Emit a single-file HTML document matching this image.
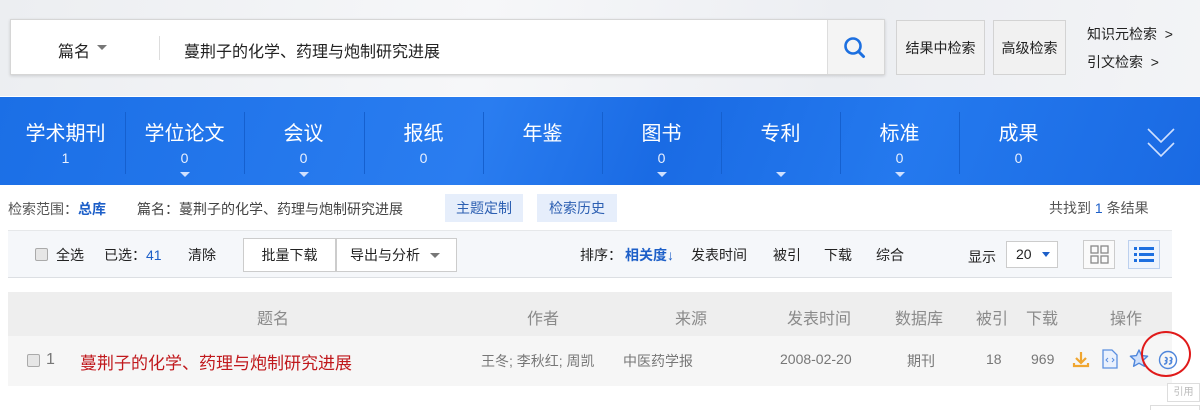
<!DOCTYPE html>
<html><head><meta charset="utf-8"><style>
*{margin:0;padding:0;box-sizing:border-box}
body{width:1200px;height:410px;overflow:hidden;background:#fff;font-family:"Liberation Sans","Noto Sans CJK SC",sans-serif;color:#333;position:relative}
.a{position:absolute;white-space:nowrap}
.top{position:absolute;left:0;top:0;width:1200px;height:96px;background:linear-gradient(100deg,#eceef1,#f6f7f9 40%,#eceef2 70%,#f3f4f6)}
.sbox{position:absolute;left:10px;top:19px;width:875px;height:56px;background:#fff;border:1px solid #d6d6d6;box-shadow:0 1px 3px rgba(0,0,0,.15)}
.btn{position:absolute;top:20px;height:55px;background:#f1f1f1;border:1px solid #d3d3d3;font-size:14px;color:#222;display:flex;align-items:center;justify-content:center}
.blue{position:absolute;left:0;top:97px;width:1200px;height:88px;background:linear-gradient(110deg,#1b6fe6,#2a7df0 40%,#1a6be4 55%,#2479ee 75%,#1a6ae3)}
.tab{position:absolute;top:97px;width:119px;height:88px;color:#fff;text-align:center}
.tab b{display:block;font-weight:normal;font-size:20px;margin-top:25px;line-height:24px}
.tab i{display:block;font-style:normal;font-size:14px;line-height:16px;margin-top:4px;color:#e8f0ff}
.tab s{position:absolute;left:55px;top:75px;border-left:5px solid transparent;border-right:5px solid transparent;border-top:5px solid #cfe0ff}
.sep{position:absolute;top:112px;width:1px;height:62px;background:#1560cf}
.f14{font-size:14px}
.tool{position:absolute;left:8px;top:230px;width:1164px;height:48px;background:#f5f7fa;border-top:1px solid #e6e8ea;border-bottom:1px solid #dcdfe3}
.hdr{position:absolute;left:8px;top:292px;width:1164px;height:44px;background:#eeeeee}
.row{position:absolute;left:8px;top:336px;width:1164px;height:50px;background:#f6f6f6}
.g{color:#8a8a8a;font-size:16px}
.cb{position:absolute;width:13px;height:13px;border:1px solid #aaa;border-radius:2px;background:#e6e6e6}
</style></head><body>
<div class="top"></div>
<div class="sbox"></div>
<div class="a" style="left:58px;top:38px;font-size:16px;color:#222">篇名</div>
<div class="a" style="left:97px;top:45px;border-left:5px solid transparent;border-right:5px solid transparent;border-top:5px solid #777"></div>
<div class="a" style="left:159px;top:36px;width:1px;height:24px;background:#ddd"></div>
<div class="a" style="left:184px;top:38px;font-size:16px;color:#222">蔓荆子的化学、药理与炮制研究进展</div>
<div class="a" style="left:827px;top:20px;width:57px;height:54px;background:#f4f4f4;border-left:1px solid #ddd"></div>
<svg class="a" style="left:843px;top:36px" width="24" height="24" viewBox="0 0 24 24"><circle cx="10" cy="10" r="7.5" fill="none" stroke="#1c6fe0" stroke-width="2.6"/><path d="M15.5 15.5l5 5" stroke="#1c6fe0" stroke-width="3" stroke-linecap="round"/></svg>
<div class="btn" style="left:896px;width:89px">结果中检索</div>
<div class="btn" style="left:993px;width:73px">高级检索</div>
<div class="a f14" style="left:1087px;top:24px;color:#222">知识元检索 &nbsp;&gt;</div>
<div class="a f14" style="left:1087px;top:52px;color:#222">引文检索 &nbsp;&gt;</div>

<div class="blue"></div>
<div class="tab" style="left:6px"><b>学术期刊</b><i>1</i></div>
<div class="tab" style="left:125px"><b>学位论文</b><i>0</i><s></s></div>
<div class="tab" style="left:244px"><b>会议</b><i>0</i><s></s></div>
<div class="tab" style="left:364px"><b>报纸</b><i>0</i></div>
<div class="tab" style="left:483px"><b>年鉴</b></div>
<div class="tab" style="left:602px"><b>图书</b><i>0</i><s></s></div>
<div class="tab" style="left:721px"><b>专利</b><s></s></div>
<div class="tab" style="left:840px"><b>标准</b><i>0</i><s></s></div>
<div class="tab" style="left:959px"><b>成果</b><i>0</i></div>
<div class="sep" style="left:125px"></div><div class="sep" style="left:244px"></div><div class="sep" style="left:364px"></div><div class="sep" style="left:483px"></div><div class="sep" style="left:602px"></div><div class="sep" style="left:721px"></div><div class="sep" style="left:840px"></div><div class="sep" style="left:959px"></div>
<svg class="a" style="left:1146px;top:127px" width="30" height="32" viewBox="0 0 30 32"><path d="M2 2l13 13 13-13M2 16l13 13 13-13" fill="none" stroke="#cfe0ff" stroke-width="1.6"/></svg>

<div class="a f14" style="left:8px;top:199px;color:#555">检索范围：<b style="color:#1d5fc8">总库</b></div>
<div class="a f14" style="left:137px;top:199px;color:#444">篇名：蔓荆子的化学、药理与炮制研究进展</div>
<div class="a f14" style="left:445px;top:194px;width:78px;height:28px;background:#e6eefb;color:#2c5fb2;text-align:center;line-height:28px">主题定制</div>
<div class="a f14" style="left:537px;top:194px;width:80px;height:28px;background:#e6eefb;color:#2c5fb2;text-align:center;line-height:28px">检索历史</div>
<div class="a f14" style="left:1049px;top:198px;color:#555">共找到 <span style="color:#1d5fc8">1</span> 条结果</div>

<div class="tool"></div>
<div class="cb" style="left:35px;top:248px"></div>
<div class="a f14" style="left:56px;top:245px;color:#222">全选</div>
<div class="a f14" style="left:104px;top:245px;color:#222">已选：<span style="color:#1d5fc8">41</span></div>
<div class="a f14" style="left:188px;top:245px;color:#222">清除</div>
<div class="a f14" style="left:243px;top:238px;width:93px;height:34px;background:#fff;border:1px solid #ccc;line-height:32px;text-align:center;color:#222">批量下载</div>
<div class="a f14" style="left:336px;top:238px;width:121px;height:34px;background:#fff;border:1px solid #ccc;line-height:32px;padding-left:13px;color:#222">导出与分析</div>
<div class="a" style="left:430px;top:253px;border-left:5px solid transparent;border-right:5px solid transparent;border-top:5px solid #777"></div>
<div class="a f14" style="left:580px;top:245px;color:#222">排序：</div>
<div class="a f14" style="left:625px;top:245px;color:#1d5fc8;font-weight:bold">相关度<span style="font-weight:bold">&#8595;</span></div>
<div class="a f14" style="left:691px;top:245px;color:#222">发表时间</div>
<div class="a f14" style="left:773px;top:245px;color:#222">被引</div>
<div class="a f14" style="left:824px;top:245px;color:#222">下载</div>
<div class="a f14" style="left:876px;top:245px;color:#222">综合</div>
<div class="a f14" style="left:968px;top:247px;color:#222">显示</div>
<div class="a f14" style="left:1006px;top:241px;width:52px;height:27px;background:#fff;border:1px solid #ccc;line-height:25px;padding-left:9px;color:#222">20</div>
<div class="a" style="left:1042px;top:252px;border-left:4px solid transparent;border-right:4px solid transparent;border-top:5px solid #1d5fc8"></div>
<div class="a" style="left:1083px;top:240px;width:32px;height:29px;border:1px solid #ccc;background:#fafafa"></div>
<svg class="a" style="left:1090px;top:245px" width="19" height="19"><rect x="1" y="1" width="7" height="7" fill="none" stroke="#888" stroke-width="1.3"/><rect x="11" y="1" width="7" height="7" fill="none" stroke="#888" stroke-width="1.3"/><rect x="1" y="11" width="7" height="7" fill="none" stroke="#888" stroke-width="1.3"/><rect x="11" y="11" width="7" height="7" fill="none" stroke="#888" stroke-width="1.3"/></svg>
<div class="a" style="left:1128px;top:240px;width:32px;height:29px;border:1px solid #bcd0ee;background:#eef4fd"></div>
<svg class="a" style="left:1133px;top:245px" width="22" height="19"><g fill="#1d6fe0"><rect x="1" y="2" width="3" height="3"/><rect x="6" y="2" width="15" height="3"/><rect x="1" y="8" width="3" height="3"/><rect x="6" y="8" width="15" height="3"/><rect x="1" y="14" width="3" height="3"/><rect x="6" y="14" width="15" height="3"/></g></svg>

<div class="hdr"></div>
<div class="a g" style="left:257px;top:305px">题名</div>
<div class="a g" style="left:527px;top:305px">作者</div>
<div class="a g" style="left:675px;top:305px">来源</div>
<div class="a g" style="left:787px;top:305px">发表时间</div>
<div class="a g" style="left:895px;top:305px">数据库</div>
<div class="a g" style="left:976px;top:305px">被引</div>
<div class="a g" style="left:1026px;top:305px">下载</div>
<div class="a g" style="left:1110px;top:305px">操作</div>

<div class="row"></div>
<div class="cb" style="left:27px;top:354px"></div>
<div class="a g" style="left:46px;top:351px;color:#777">1</div>
<div class="a" style="left:80px;top:349px;font-size:17px;color:#c0181c">蔓荆子的化学、药理与炮制研究进展</div>
<div class="a f14" style="left:481px;top:351px;color:#777">王冬; 李秋红; 周凯</div>
<div class="a f14" style="left:623px;top:351px;color:#777">中医药学报</div>
<div class="a f14" style="left:780px;top:351px;color:#777">2008-02-20</div>
<div class="a f14" style="left:907px;top:351px;color:#777">期刊</div>
<div class="a f14" style="left:986px;top:351px;color:#777">18</div>
<div class="a f14" style="left:1031px;top:351px;color:#777">969</div>
<svg class="a" style="left:1072px;top:350px" width="18" height="18"><path d="M9 2v10M4 8l5 5 5-5M2 13v3h14v-3" fill="none" stroke="#f0a630" stroke-width="2.2"/></svg>
<svg class="a" style="left:1102px;top:349px" width="16" height="20"><path d="M1 1h9l5 5v13H1z" fill="#eaf1fd" stroke="#5b8fe0" stroke-width="1.3"/><path d="M6 9l-2 2 2 2M10 9l2 2-2 2" fill="none" stroke="#5b8fe0" stroke-width="1"/></svg>
<svg class="a" style="left:1129px;top:349px" width="20" height="20"><path d="M10 1l2.6 5.6 6 .6-4.5 4.1 1.3 6-5.4-3.1-5.4 3.1 1.3-6L1.4 7.2l6-.6z" fill="#cfe0fb" stroke="#4f86db" stroke-width="1.4" stroke-linejoin="round"/></svg>
<svg class="a" style="left:1158px;top:350px" width="20" height="20"><circle cx="10" cy="10" r="8.5" fill="none" stroke="#4f86db" stroke-width="1.4"/><path d="M7.5 7.5a1.6 1.6 0 1 1 0 3.2M7.5 10.7c1.8-.2 1.8 2.6-.8 3.3M12.3 7.5a1.6 1.6 0 1 1 0 3.2M12.3 10.7c1.8-.2 1.8 2.6-.8 3.3" fill="none" stroke="#4f86db" stroke-width="1.6" stroke-linecap="round"/></svg>
<div class="a" style="left:1141px;top:331px;width:50px;height:46px;border:2px solid #e01a1a;border-radius:50%"></div>
<div class="a" style="left:1167px;top:383px;width:33px;height:19px;border:1px solid #ddd;background:#fff;font-size:10px;color:#bbb;text-align:center;line-height:17px">引用</div>
<div class="a" style="left:1150px;top:405px;width:50px;height:5px;border:1px solid #ddd;border-bottom:none"></div>
</body></html>
